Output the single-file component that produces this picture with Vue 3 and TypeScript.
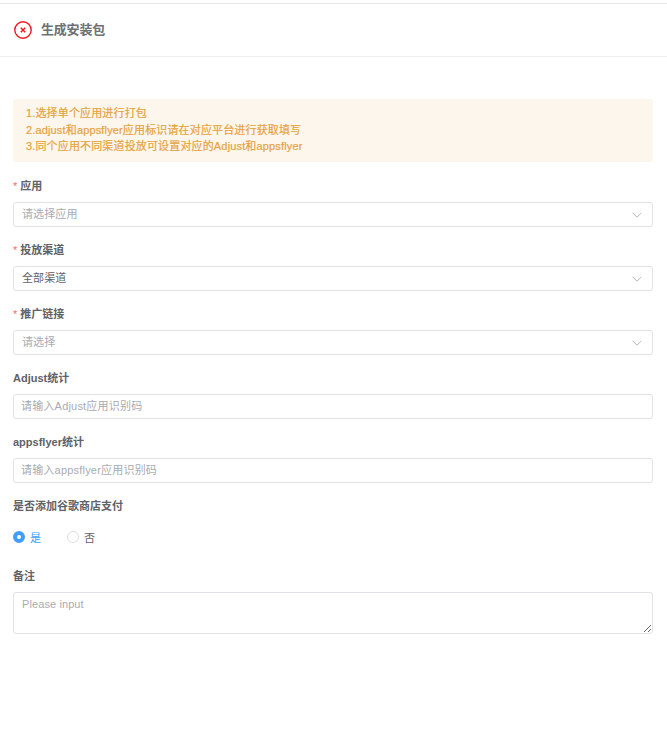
<script setup lang="ts">
interface Field {
  label: string
  required?: boolean
  kind: 'select' | 'input'
  placeholder?: string
  value?: string
}
const fields: Field[] = [
  { label: '应用', required: true, kind: 'select', placeholder: '请选择应用' },
  { label: '投放渠道', required: true, kind: 'select', value: '全部渠道' },
  { label: '推广链接', required: true, kind: 'select', placeholder: '请选择' },
  { label: 'Adjust统计', kind: 'input', placeholder: '请输入Adjust应用识别码' },
  { label: 'appsflyer统计', kind: 'input', placeholder: '请输入appsflyer应用识别码' }
]
</script>

<template>
  <div class="page">
    <header class="head">
      <svg class="close" viewBox="0 0 18 18" width="18" height="18" aria-hidden="true">
        <circle cx="9" cy="9" r="8.2" fill="none" stroke="#f5141e" stroke-width="1.4" />
        <path d="M6.8 6.8l4.4 4.4M11.2 6.8l-4.4 4.4" fill="none" stroke="#f5141e" stroke-width="1.5" />
      </svg>
      <h1 class="title">生成安装包</h1>
    </header>
    <main class="body">
      <div class="alert">
        <p>1.选择单个应用进行打包</p>
        <p>2.adjust和appsflyer应用标识请在对应平台进行获取填写</p>
        <p>3.同个应用不同渠道投放可设置对应的Adjust和appsflyer</p>
      </div>
      <div v-for="f in fields" :key="f.label" class="item">
        <label class="label"><span v-if="f.required" class="star">*</span>{{ f.label }}</label>
        <div v-if="f.kind === 'select'" class="control select">
          <span :class="f.value ? 'val' : 'ph'">{{ f.value || f.placeholder }}</span>
          <svg class="arrow" viewBox="0 0 10 6" width="10" height="6" aria-hidden="true">
            <path d="M.5.7L5 5.2 9.5.7" fill="none" stroke="#b4b6bc" stroke-width="1" />
          </svg>
        </div>
        <input v-else class="control field" :placeholder="f.placeholder" />
      </div>
      <div class="item radio-item">
        <label class="label">是否添加谷歌商店支付</label>
        <div class="radios">
          <span class="radio on"><i class="dot"></i>是</span>
          <span class="radio"><i class="dot"></i>否</span>
        </div>
      </div>
      <div class="item note">
        <label class="label">备注</label>
        <textarea class="area" placeholder="Please input"></textarea>
      </div>
    </main>
  </div>
</template>

<style>
html, body { margin: 0; background: #fff; }
</style>

<style scoped>
.page {
  box-sizing: border-box;
  border-top: 1px solid #e4e7ed;
  margin-top: 3px;
  height: 735px;
  font-family: "Liberation Sans", "Noto Sans CJK SC", sans-serif;
  font-size: 11px;
  color: #606266;
  overflow: hidden;
}
.head {
  display: flex;
  align-items: center;
  gap: 9px;
  height: 52px;
  padding-left: 14px;
  border-bottom: 1px solid #f0f0f2;
}
.title { margin: 0 0 3px; font-size: 13px; font-weight: 700; color: #6e7073; letter-spacing: -0.2px; }
.body { padding: 42px 14px 0 13px; }
.alert {
  box-sizing: border-box;
  height: 63px;
  padding: 6px 13px;
  margin-bottom: 17px;
  background: #fdf6ec;
  border-radius: 3px;
  color: #e6a23c;
  line-height: 16.5px;
  letter-spacing: 0.15px;
  -webkit-text-stroke: 0.2px #e6a23c;
}
.alert p { margin: 0; }
.item { margin-top: 16px; }
.alert + .item { margin-top: 0; }
.label {
  display: block;
  height: 23px;
  line-height: 14px;
  font-weight: 700;
  color: #606266;
}
.star { color: #f56c6c; margin-right: 3px; font-weight: 400; }
.control {
  display: block;
  box-sizing: border-box;
  width: 100%;
  height: 25px;
  border: 1px solid #e0e2e8;
  border-radius: 3px;
  background: #fff;
  padding: 0 7px 1px;
  font: inherit;
  line-height: 23px;
}
.select { display: flex; justify-content: space-between; align-items: center; padding-left: 8px; padding-right: 10px; padding-bottom: 0; letter-spacing: 0.1px; }
.ph { color: #a8abb2; }
.val { color: #606266; }
.arrow { flex: none; }
.field { outline: none; color: #606266; letter-spacing: 0.2px; }
.field::placeholder, .area::placeholder { color: #a8abb2; opacity: 1; }
.radios { display: flex; gap: 26px; height: 25px; margin-top: 2px; align-items: center; }
.radio { display: flex; align-items: center; gap: 5px; color: #606266; }
.radio.on { color: #409eff; }
.dot {
  box-sizing: border-box;
  width: 12px;
  height: 12px;
  border-radius: 50%;
  border: 1px solid #dcdfe6;
  background: #fff;
}
.on .dot { border: 4px solid #409eff; }
.note { margin-top: 20px; }
.area {
  display: block;
  box-sizing: border-box;
  width: 100%;
  height: 42px;
  border: 1px solid #e0e2e8;
  border-radius: 3px;
  padding: 5px 8px;
  font: inherit;
  letter-spacing: 0.1px;
  outline: none;
  margin: 0;
  resize: vertical;
}
</style>
